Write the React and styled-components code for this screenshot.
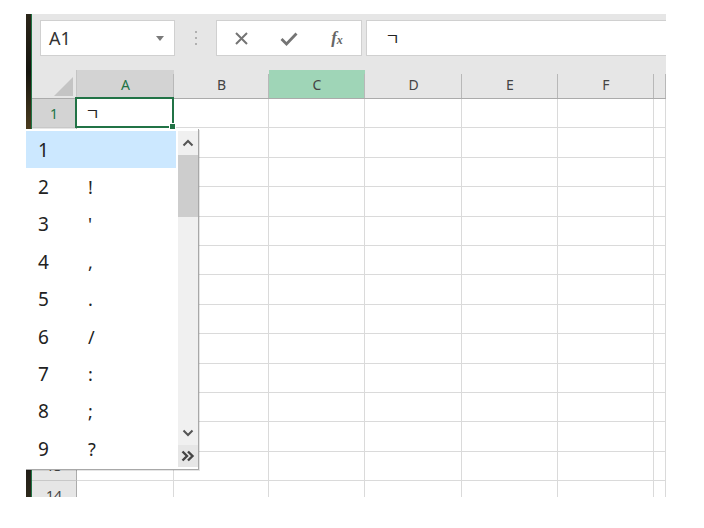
import styled, { createGlobalStyle } from "styled-components";

// Excel-like sheet with an IME symbol candidate list open over column A

const GlobalStyle = createGlobalStyle`
  html, body {
    margin: 0;
    padding: 0;
    background: #fff;
  }
  body {
    font-family: "Segoe UI", "Noto Sans", "Noto Sans CJK KR", sans-serif;
  }
`;

const COLUMNS = ["A", "B", "C", "D", "E", "F", ""];
const ROWS = Array.from({ length: 14 }, (_, i) => i + 1);
const CANDIDATES = [" ", "!", "'", ",", ".", "/", ":", ";", "?"];
const GREEN = "#217346";
const TEMPLATE = "45px 97px 95px 96px 97px 96px 96px 1fr";

export default function App() {
  return (
    <>
      <GlobalStyle />
      <Window>
        <Strip />
        <Sheet>
          <FormulaBar>
            <NameBox>
              <span>A1</span>
              <Caret />
            </NameBox>
            <Dots>
              <i />
              <i />
              <i />
            </Dots>
            <FxBox>
              <IconCell>
                <svg width="15" height="15" viewBox="0 0 15 15">
                  <path d="M2 2 L13 13 M13 2 L2 13" stroke="#747474" strokeWidth="2" fill="none" />
                </svg>
              </IconCell>
              <IconCell>
                <svg width="18" height="15" viewBox="0 0 18 15">
                  <path d="M1.5 8 L6.5 13 L16.5 2.5" stroke="#747474" strokeWidth="2.8" fill="none" />
                </svg>
              </IconCell>
              <IconCell>
                <Fx>
                  f<sub>x</sub>
                </Fx>
              </IconCell>
            </FxBox>
            <FormulaInput>ㄱ</FormulaInput>
          </FormulaBar>

          <HeaderRow>
            <Corner />
            {COLUMNS.map((c, i) => (
              <ColHeader key={i} $active={c === "A"} $hover={c === "C"}>
                {c}
              </ColHeader>
            ))}
          </HeaderRow>

          {ROWS.map((r) => (
            <Row key={r}>
              <RowHeader $active={r === 1}>{r}</RowHeader>
              {COLUMNS.map((c, i) =>
                r === 1 && i === 0 ? (
                  <ActiveCell key={i}>ㄱ</ActiveCell>
                ) : (
                  <Cell key={i} />
                )
              )}
            </Row>
          ))}
        </Sheet>

        <Candidates>
          <List>
            {CANDIDATES.map((s, i) => (
              <Item key={i} $selected={i === 0}>
                <Num>{i + 1}</Num>
                <Sym>{s}</Sym>
              </Item>
            ))}
          </List>
          <Scrollbar>
            <ArrowBtn>
              <svg width="12" height="8" viewBox="0 0 12 8">
                <path d="M1.5 6.5 L6 2 L10.5 6.5" stroke="#555" strokeWidth="2" fill="none" />
              </svg>
            </ArrowBtn>
            <Thumb />
            <Track />
            <ArrowBtn>
              <svg width="12" height="8" viewBox="0 0 12 8">
                <path d="M1.5 1.5 L6 6 L10.5 1.5" stroke="#555" strokeWidth="2" fill="none" />
              </svg>
            </ArrowBtn>
            <MoreBtn>
              <svg width="14" height="12" viewBox="0 0 14 12">
                <path d="M1.5 1.5 L6 6 L1.5 10.5 M7 1.5 L11.5 6 L7 10.5" stroke="#444" strokeWidth="2.4" fill="none" />
              </svg>
            </MoreBtn>
          </Scrollbar>
        </Candidates>
      </Window>
    </>
  );
}

/* window */
const Window = styled.div`
  position: relative;
  margin: 14px 0 0 26px;
  width: 640px;
  height: 483px;
  display: flex;
  overflow: hidden;
  background: #fff;
`;

const Strip = styled.div`
  width: 5px;
  flex-shrink: 0;
  border-right: 1px solid ${GREEN};
  background: linear-gradient(
    180deg,
    #2b2619 0%,
    #16150f 12%,
    #4b3c1e 24%,
    #121212 38%,
    #3a4a5e 48%,
    #151410 60%,
    #5a4a26 72%,
    #101010 86%,
    #2d281b 100%
  );
`;

const Sheet = styled.div`
  flex: 1;
  min-width: 0;
  display: flex;
  flex-direction: column;
`;

/* formula bar */
const FormulaBar = styled.div`
  height: 56px;
  flex-shrink: 0;
  display: flex;
  align-items: flex-start;
  padding: 6px 0 0 8px;
  box-sizing: border-box;
  background: #e6e6e6;
`;

const NameBox = styled.div`
  width: 135px;
  height: 36px;
  box-sizing: border-box;
  display: flex;
  align-items: center;
  justify-content: space-between;
  padding: 0 10px 0 8px;
  background: #fff;
  border: 1px solid #d0d0d0;
  font-size: 18px;
  color: #333;
`;

const Caret = styled.span`
  width: 0;
  height: 0;
  border-left: 4px solid transparent;
  border-right: 4px solid transparent;
  border-top: 5px solid #7a7a7a;
`;

const Dots = styled.div`
  width: 41px;
  height: 36px;
  display: flex;
  flex-direction: column;
  align-items: center;
  justify-content: center;
  gap: 4px;

  i {
    width: 2px;
    height: 2px;
    background: #b0b0b0;
  }
`;

const FxBox = styled.div`
  width: 146px;
  height: 36px;
  box-sizing: border-box;
  display: grid;
  grid-template-columns: repeat(3, 48px);
  background: #fff;
  border: 1px solid #d0d0d0;
`;

const IconCell = styled.div`
  display: flex;
  align-items: center;
  justify-content: center;
`;

const Fx = styled.span`
  font-family: "Liberation Serif", serif;
  font-style: italic;
  font-weight: bold;
  font-size: 17px;
  color: #666;
  sub {
    font-size: 12px;
    vertical-align: -1px;
  }
`;

const FormulaInput = styled.div`
  flex: 1;
  height: 36px;
  margin-left: 4px;
  box-sizing: border-box;
  display: flex;
  align-items: center;
  padding-left: 18px;
  background: #fff;
  border: 1px solid #d0d0d0;
  border-right: none;
  font-family: "Noto Sans CJK KR", sans-serif;
  font-size: 16px;
  color: #222;
`;

/* grid */
const HeaderRow = styled.div`
  height: 29px;
  flex-shrink: 0;
  display: grid;
  grid-template-columns: ${TEMPLATE};
  box-sizing: border-box;
  background: #e6e6e6;
  border-bottom: 1px solid #ababab;
`;

const Corner = styled.div`
  position: relative;
  border-right: 1px solid #c4c4c4;
  &::after {
    content: "";
    position: absolute;
    right: 3px;
    bottom: 2px;
    width: 0;
    height: 0;
    border-left: 19px solid transparent;
    border-bottom: 19px solid #c4c4c4;
  }
`;

const ColHeader = styled.div`
  position: relative;
  display: flex;
  align-items: center;
  justify-content: center;
  font-size: 14px;
  color: ${(p) => (p.$active ? GREEN : "#444")};
  background: ${(p) => (p.$active ? "#d3d3d3" : p.$hover ? "#9fd5b7" : "transparent")};
  &::after {
    content: "";
    position: absolute;
    right: 0;
    top: 4px;
    bottom: 0;
    width: 1px;
    background: #b8b8b8;
  }
`;

const Row = styled.div`
  height: 29.4px;
  flex-shrink: 0;
  display: grid;
  grid-template-columns: ${TEMPLATE};
`;

const RowHeader = styled.div`
  display: flex;
  align-items: center;
  justify-content: center;
  box-sizing: border-box;
  font-size: 14px;
  color: ${(p) => (p.$active ? GREEN : "#444")};
  background: ${(p) => (p.$active ? "#d3d3d3" : "#e6e6e6")};
  border-right: 1px solid #ababab;
  border-bottom: 1px solid #c8c8c8;
`;

const Cell = styled.div`
  box-sizing: border-box;
  border-right: 1px solid #dadada;
  border-bottom: 1px solid #dadada;
`;

const ActiveCell = styled(Cell)`
  position: relative;
  display: flex;
  align-items: center;
  padding-left: 8px;
  font-family: "Noto Sans CJK KR", sans-serif;
  font-size: 16px;
  color: #222;
  &::after {
    content: "";
    position: absolute;
    top: -2px;
    left: -2px;
    right: -1px;
    bottom: -1px;
    border: 2px solid ${GREEN};
  }
  &::before {
    content: "";
    position: absolute;
    right: -3px;
    bottom: -3px;
    width: 5px;
    height: 5px;
    background: ${GREEN};
    border: 1px solid #fff;
    z-index: 1;
  }
`;

/* candidate list */
const Candidates = styled.div`
  position: absolute;
  left: 0;
  top: 115px;
  width: 173px;
  height: 341px;
  box-sizing: border-box;
  display: flex;
  gap: 2px;
  background: #fff;
  border-right: 1px solid #a8a8a8;
  border-bottom: 1px solid #a8a8a8;
  box-shadow: 1px 1px 0 rgba(0, 0, 0, 0.1);
  z-index: 2;
`;

const List = styled.div`
  width: 150px;
  padding-top: 2px;
`;

const Item = styled.div`
  height: 37.4px;
  display: flex;
  align-items: center;
  padding-left: 12px;
  background: ${(p) => (p.$selected ? "#cce8ff" : "transparent")};
  font-size: 19px;
  color: #222;
`;

const Num = styled.span`
  width: 50px;
`;

const Sym = styled.span`
  font-size: 18px;
`;

const Scrollbar = styled.div`
  width: 20px;
  margin: 2px 0;
  display: flex;
  flex-direction: column;
  background: #f0f0f0;
`;

const ArrowBtn = styled.div`
  height: 24px;
  display: flex;
  align-items: center;
  justify-content: center;
`;

const Thumb = styled.div`
  height: 62px;
  background: #cdcdcd;
`;

const Track = styled.div`
  flex: 1;
`;

const MoreBtn = styled.div`
  height: 22px;
  display: flex;
  align-items: center;
  justify-content: center;
  background: #e6e6e6;
`;
